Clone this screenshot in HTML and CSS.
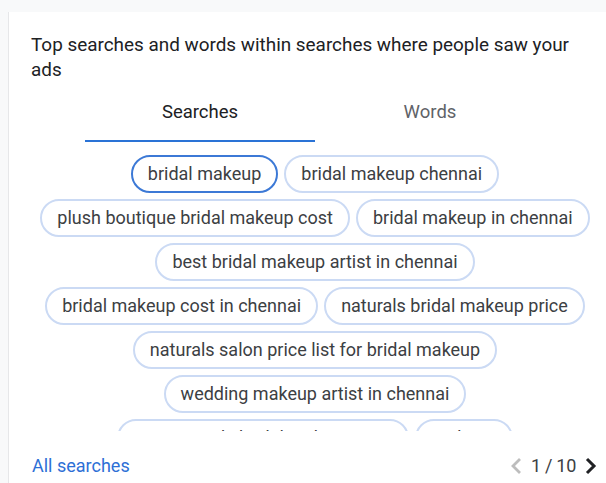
FILE: index.html
```html
<!DOCTYPE html>
<html lang="en">
<head>
    <meta charset="UTF-8" />
    <title>Top searches</title>
    <link rel="stylesheet" href="styles.css">
</head>
<body>
    <div class="card">
        <p class="intro">Top searches and words within searches where people saw your ads</p>

        <div class="tabs">
            <div class="tab active">Searches</div>
            <div class="tab">Words</div>
        </div>

        <div class="chips">
            <span class="chip selected">bridal makeup</span>
            <span class="chip">bridal makeup chennai</span>
            <span class="chip">plush boutique bridal makeup cost</span>
            <span class="chip">bridal makeup in chennai</span>
            <span class="chip">best bridal makeup artist in chennai</span>
            <span class="chip">bridal makeup cost in chennai</span>
            <span class="chip">naturals bridal makeup price</span>
            <span class="chip">naturals salon price list for bridal makeup</span>
            <span class="chip">wedding makeup artist in chennai</span>
            <span class="chip">green trends bridal makeup cost</span>
            <span class="chip">makeup</span>
        </div>

        <div class="footer">
            <a href="#all" class="all-link">All searches</a>
            <div class="pager">
                <svg class="chev prev" width="12" height="18" viewBox="0 0 12 18"><path d="M10 2 L3 9 L10 16" fill="none" stroke="currentColor" stroke-width="2.8"/></svg>
                <span class="count">1 / 10</span>
                <svg class="chev next" width="12" height="18" viewBox="0 0 12 18"><path d="M2 2 L9 9 L2 16" fill="none" stroke="currentColor" stroke-width="3"/></svg>
            </div>
        </div>
    </div>
</body>
</html>
```

FILE: styles.css
```css
body { margin: 0; background: #f8f9fa; font-family: Roboto, "Noto Sans", Arial, sans-serif; color: #202124; overflow: hidden; }
.card { margin: 12px 0 0 9px; background: #fff; box-shadow: -1px 0 0 #e6e7e9; padding: 20px 7px 0 22px; height: calc(100vh - 12px); box-sizing: border-box; }
.intro { margin: 0; width: 568px; font-size: 18.9px; line-height: 25px; color: #202124; }
.tabs { display: flex; justify-content: center; margin-top: 14px; width: 568px; }
.tab { width: 230px; text-align: center; font-size: 18.5px; height: 44px; line-height: 32px; color: #5f6368; border-bottom: 2px solid transparent; }
.tab.active { color: #202124; border-bottom-color: #2a73d6; }
.chips { display: flex; flex-wrap: wrap; justify-content: center; gap: 6px; width: 568px; margin-top: 13px; height: 276px; overflow: hidden; align-content: flex-start; }
.chip { height: 38px; box-sizing: border-box; border: 2px solid #cbdaf4; border-radius: 19px; padding: 0 15px; font-size: 18px; line-height: 34px; color: #3c4043; white-space: nowrap; }
.chip.selected { border-color: #3c79d6; }
.footer { display: flex; justify-content: space-between; align-items: center; width: 565px; margin-top: 24px; padding-left: 1px; }
.all-link { color: #2d6fd6; text-decoration: none; font-size: 18px; }
.pager { display: flex; align-items: center; gap: 9px; font-size: 18px; color: #3c4043; }
.count { letter-spacing: -0.3px; }
.chev.prev { color: #bdbdbd; }
.chev.next { color: #202124; }
```
